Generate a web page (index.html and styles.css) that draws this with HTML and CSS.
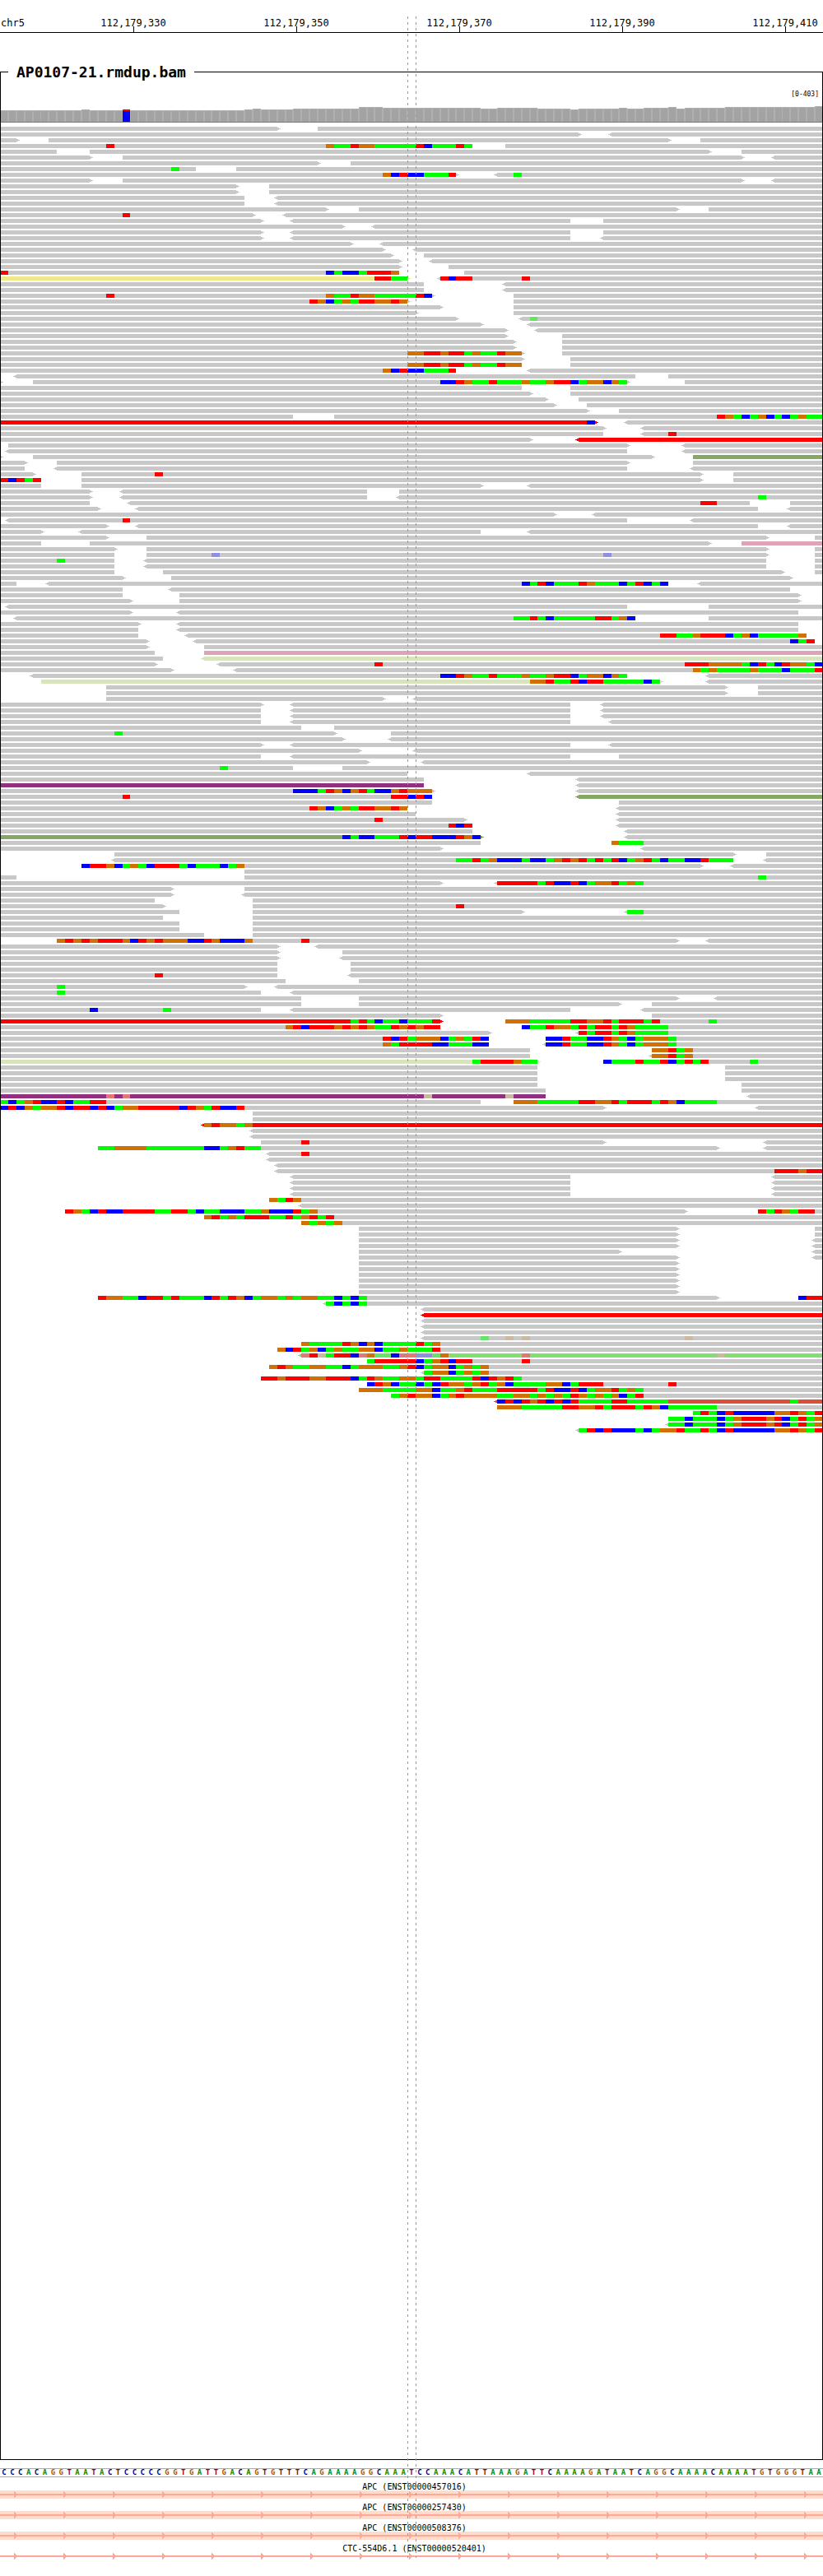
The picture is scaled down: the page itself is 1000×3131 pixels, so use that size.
FILE: index.html
```html
<!DOCTYPE html>
<html lang="en">
<head>
<meta charset="utf-8">
<title>AP0107-21.rmdup.bam</title>
<link rel="stylesheet" href="styles.css">
</head>
<body>
<main class="browser">
  <header>
    <svg class="ruler" role="img" aria-label="Position on chr5"></svg>
  </header>

  <fieldset class="track">
    <legend class="track-name">AP0107-21.rmdup.bam</legend>
    <div class="track-view">
      <p class="range">[0-403]</p>
      <svg class="coverage" role="img" aria-label="Coverage"></svg>
      <svg class="reads" role="img" aria-label="Aligned reads"></svg>
    </div>
  </fieldset>

  <div class="sequence"></div>

  <ul class="transcripts">
    <li class="transcript">
      <span class="transcript-name">APC (ENST00000457016)</span>
      <svg class="strand exon"></svg>
    </li>
    <li class="transcript">
      <span class="transcript-name">APC (ENST00000257430)</span>
      <svg class="strand exon"></svg>
    </li>
    <li class="transcript">
      <span class="transcript-name">APC (ENST00000508376)</span>
      <svg class="strand exon"></svg>
    </li>
    <li class="transcript">
      <span class="transcript-name">CTC-554D6.1 (ENST00000520401)</span>
      <svg class="strand"></svg>
    </li>
  </ul>

  <div class="guide guide-start"></div>
  <div class="guide guide-end"></div>
</main>
<script src="app.js"></script>
</body>
</html>
```
FILE: styles.css
```css
* {
  box-sizing: border-box;
}

body {
  margin: 0;
  background: #fff;
  color: #000;
  font-family: "DejaVu Sans Mono", monospace;
}

svg {
  display: block;
  width: 100%;
  shape-rendering: crispEdges;
}

.browser {
  position: relative;
  padding-bottom: 13px;
}

/* ruler */

.ruler {
  height: 77px;
  font-size: 12px;
}

.ruler-tick {
  fill: #000;
}

.ruler-label {
  text-anchor: middle;
}

/* alignment track */

.track {
  margin: 0;
  padding: 0;
  border: 1px solid #000;
  min-width: 0;
}

.track-name {
  margin-left: 9px;
  padding: 0 10px;
  font-size: 18px;
  font-weight: bold;
  line-height: 21px;
}

.track-view {
  overflow: hidden;
}

.track-view svg {
  width: calc(100% + 2px);
  margin-left: -1px;
}

.range {
  margin: 0;
  padding: 12px 4px 9px 0;
  font-size: 8px;
  line-height: 10px;
  text-align: right;
}

.coverage {
  height: 20px;
}

.bar-edge { fill: #b0b0b0; }
.bar { fill: #a3a3a3; }
.bar-base { fill: #7b7b7b; }

.reads {
  margin-top: 5px;
}

.read { fill: #c8c8c8; }
.read-red { fill: #f00; }
.read-khaki { fill: #f0e98c; }
.read-purple { fill: #913080; }
.read-olive { fill: #86a865; }
.read-pale { fill: #d8e4be; }
.read-pink { fill: #dca4b6; }
.read-lime { fill: #82df6f; }
.read-brick { fill: #d94f38; }

.base-A { fill: #0f0; }
.base-C { fill: #00f; }
.base-G { fill: #d17105; }
.base-T { fill: #f00; }
.base-a { fill: #64e664; }
.base-c { fill: #8f8fdc; }
.base-g { fill: #cab8a2; }
.base-t { fill: #e17878; }

/* reference sequence */

.sequence {
  display: grid;
  grid-template-columns: repeat(101, minmax(0, 1fr));
  margin-top: 10px;
  border: solid #aaa;
  border-width: 1px 0;
  font-size: 9px;
  font-weight: bold;
  line-height: 9px;
  text-align: center;
}

.nt-A { color: #009600; }
.nt-C { color: #00008b; }
.nt-G { color: #a5590a; }
.nt-T { color: #a00000; }

/* transcripts */

.transcripts {
  margin: 7px 0 0;
  padding: 0;
  list-style: none;
}

.transcript {
  height: 25px;
}

.transcript-name {
  display: block;
  margin-bottom: -1px;
  padding-left: 7px;
  font-size: 10px;
  line-height: 10px;
  text-align: center;
}

.strand {
  height: 10px;
}

.exon {
  background: #ffdccc;
}

.strand-mark {
  fill: #ffa898;
}

/* centre column guides */

.guide {
  position: absolute;
  top: 20px;
  bottom: 22px;
  width: 1px;
  background: repeating-linear-gradient(#999 0 3px, transparent 3px 7px);
}

.guide-start { left: calc(100% * 50 / 101); }
.guide-end { left: calc(100% * 51 / 101); }
```
FILE: app.js
```js
const BASES = 101;
const ROW = 7;
const READ = 5;
const MAX_ROWS = 405;

const pct = n => (n * 100 / BASES) + '%';
const rect = (a, b, y, h, cls) =>
  `<rect class="${cls}" x="${pct(a)}" width="${pct(b - a)}" y="${y}" height="${h}"/>`;

// Ruler: a tick every 20 bases
let ruler = '<text x="1" y="32">chr5</text><rect y="39" width="100%" height="1"/>';
for (let i = 0; i < 5; i++) {
  const x = pct(16.36 + i * 20);
  ruler += `<text class="ruler-label" x="${x}" y="32">112,179,${330 + i * 20}</text>` +
    `<rect class="ruler-tick" x="${x}" y="32" width="1" height="7"/>`;
}
document.querySelector('.ruler').innerHTML = ruler;

// Coverage: first base and height of each run of equal bars
const DEPTH = [[0, 14], [10, 15], [11, 14], [30, 15], [31, 16], [32, 15], [36, 16], [44, 18], [47, 17],
  [59, 16], [61, 17], [66, 16], [70, 15], [71, 16], [76, 17], [77, 16], [79, 17], [82, 18], [83, 16],
  [84, 17], [89, 18], [100, 19]];
const SNP = 15;
let coverage = '';
for (let i = 0; i < BASES; i++) {
  const h = DEPTH.filter(d => d[0] <= i).pop()[1];
  if (i === SNP) {
    coverage += rect(i, i + 1, 4, 2, 'base-T') + rect(i, i + 1, 6, 13, 'base-C');
  } else {
    coverage += rect(i, i + 1, 19 - h, h, 'bar-edge') + rect(i + 0.1, i + 0.9, 20 - h, h - 1, 'bar');
  }
}
coverage += '<rect class="bar-base" y="19" width="100%" height="1"/>';
document.querySelector('.coverage').innerHTML = coverage;

// Reads, one line per row. "a-b" is a read from base a to base b, "<" and ">" mark
// its strand end, ":name" its colour. "40G41A43" is G at 40, A from 41 up to 43;
// lower case is a low quality call.
const ROWS = `
-34> 39-
-71> <75-
-2> 6-82> 86-
-58 62- 13T14 40G41A43T44G46A51T52C53A56T57A58
-7 11-87> 91-
-11> 15-91> <95-
-39> 43-
-24 29- 21A22
-56> <61- 47G48C49T50C52A55T56 63A64
-11> 15-91> <95-
-29> 33-
-29> 33-
-30 <34-
-30 <34-
-40> 44-83> 87-
-31> <35- 15T16
-32> <36-70 74-
-42> <46-
-32> <36-70 74-
-32> <36-70 <74-
-43> <47-
-47> <51-
-48> 52-
-49> <53-
-49> 55-
-49 57- 0T1 40C41A42C44A45T48G49
-50>:khaki <54- 46T48A50 54T55C56T58 64T65
-52 <62-
-52 <62-
-53> 63- 13T14 40G41A43T44G46A51T52C53
-50> 63- 38T39G40C41A42G43A44T46G48T49G50
-54> 63-
-51> 63-
-56> <64- 65a66
-59> <65-
-62> <66-
-62> 69-
-63> 69-
-63> 69-
-64> 69- 50G52T54G55T57A58G59A61T62G64
-64> 70-
-64 70- 50G52T54G55T57A58G59A61T62G64
-56 <65- 47G48C49T50C52A55T56
<2-78 82-
-0> 4-77> 84- 54C56T57G58A60T61A64G65A67G68T70C71A72G74C75G76A77
-64 70-
-65> 70-
-67> 71-
-68> 72-
-72> 76-
-36 41- 88T89G90A91C92A93G94C95A96C97A98G99A101
-73>:red <77- 72C73
-74> <79-
-74 <79- 82T83
-65> <71-:red
1-77> <84-
<1-77 <84-
-0> 4-80> 85-:olive
-3> 7-77> 85-
-3 <7-77 <85-
-4> 10-86> 90- 19T20
-5 10-86> 90- 0T1C2T3A4T5
-5 10-59> <65-
-11> <15-45 49-
-11> <15-45 <49- 93A94
-11 <16-92 97- 86T88
-12> <17-93 <97-
-68> <73-
<1-77 <85- 15T16
-13> <17-93 <97-
-5> <10-59 <65-
-13> 18-94> 100-
-5 11-87> 91-:pink
-14> 18-94> 100-
-14 18-94> 100- 26c27 74c75
-14 <18-94 100- 7A8
-14 <18-94 100-
-14 20-96> 100-
-15> 21-97>
-2 <6-82 <86- 64C65A66T67C68A71T72G73A76C77A78T79C80A81C82
-15 <21-97
-15 22-98>
-16> 22-98>
<1-77 87-
-16> <22-98
<2-78 87- 63A65T66A67C68A73T75A76G77C78
-17> <22-98
-17 <22-98
-17 <23-99 81T83A85G86T89C90A91G92C93A98G99
-18> <24-100 97C98A99T100
-18> 25-
-19 25-:pink
-20 <25-:pale
-19> <27- 46T47 84T87G91A92C93T94A95C96T97G99A100C101
-21> <29- 85G86A87G88A92G93A96C97A100T101
<4-77 <87- 54C56T57G58A60T61A64G65A67G68T70C71A72G74C75G76A77
5-81>:pale <87- 65G67T68A70T71C72T74A79C80A81
13-89> 93-
13-89> 93-
13-47> <51-
-32> <36-70 <74-
-32 <36-70 <74-
-32 <36-70 <74-
-32 <36-70 <75-
-37 41-
-41> 48- 14A15
-42> <48-
-32> <36-70 <75-
-44> <51-
-32 <36-70 76-
-45> <52-
-36 42- 27A28
-50 <65-
-52 <71-
-52:purple <71-
-53> <71- 36C39A40T41G42C43G44T45A46C48G49T50G53
-53 <71-:olive 15T16 48T50C51T52C53
-53 76-
-50 <76- 38T39G40C41A42G43A44T46G48T49G50
-51 <76-
-57> <76- 46T47
-58 <76- 55T56C57T58
-58 <77-
-59>:olive <77- 42C43A44C46A49T50C51T53C56T57G58C59
-59 75- 75G76A79
-54> <79-
14-90> 94-
<14-90 <94- 56A58T59A60G61C64A65C67A68G69T70G71T72A73T74A75T76C77A78G79T80A81C82A84C86T87A90
10-86> <90- 10C11T13G14C15A16G17A18C19T22A23C24A27C28A29G30
30-
-2 30- 93A94
-54> <61- 61T66A67T68C70T71C72A73G75T76A77G78A79
-21> 30-
-21> <30-
-19 31-
-20> 31- 56T57
-22 31-64> <77- 77A79
-20 31-
-22 31-
-22 31-
-25 31-
7-83> <87- 7G8T9G10T11G12T15G16C17T18G19T20G23C25T26G27C30G31 37T38
-34> <39-
-34> 42-
-34> <42-
-34 43-
-34 43-
-34 <43- 19T20
-35 44-
-30> <34- 7A8
-32 <36- 7A8
-37 44-83> <88-
-37 44-76> 80-
-32 <36-70 <79- 11C12 20A21
-54> 80-
-54>:red 62- 43A44T45A46C47A49C50A53T54 62G65A70T72G74T75A76T79A80T81 87A88
-54 64- 35G36T37C38T41G42T43G44T45G46A48T49G50T51G52T54 64C65A67T68G70A71T72A73T75A76T77G78A82
-60> <71- 71T72A73T75A76T77G78A82
-60 67- 47T48C49T50A51G54C55A56G57A58T59C60 67C69T70A72C74T75G76A77C78A79G82A83
-60 <67- 47G48A49T53C55A58C60 67C69T70A72C74T75G76A77C78A79G82A83
-65 80- 80G82T83A84G85
-65 <80- 80G82T83A84G85
-66>:pale 74- 58A59T63G64A66 74C75A78T79A81T82C83A84T85A86T87 92A93
-66 89-
-66 89-
-66 89-
-66 91-
-67 91-
-67:purple <92- 13t14 15t16 52g53 62g63
-59 63- 0A1C2A3G4T5C7T8C9A11T13 63G66A71T73G75T76A77T80A81T82G83C84A88
-74> <93- 0C1T2C3G4A5G7T8C9T11C12T13C14A15G17T22C23T24G25A26T27C29T30
31-
31-
<25-:red 25G26T27G29A30G31
<31-
<31-
32-74> <94- 37T38
12-88> <94- 12A14G18A25C27A28G29T30A32
<33- 37T38
<33-
<34-
<34- 95T98G99T101
<36-70 <95-
<36-70 <95-
<36-70 <95-
<36-70 <95-
33- 33G34A35T36G37
<37-
8-84> 93- 8T9G10A11C12T13C15T19A21T23A24C25A27C30A32G33C36T37A38G39 93T94A95T96G97A98T100
25- 25G26T27A28G29A30T33A35T36A37G38T39A40T41
37- 37G38A39G40A41G42
44-83> 100-
44-83> 100-
44-83> <100-
44-83> <100-
44-76> <100-
44-83> <100-
44-83>
44-83>
44-83>
44-83>
44-83>
44-83>
12-88> 98- 12T13G15A17C18T20A21T22A25C26T27A28T29G30C31A32G34A35G36A37G39A41C42A43C44A45 98C99T101
<40- 40A41C42A43C44A45
<52-
<52-:red
<52-
<52-
<52-
<52- 59a60 62g63 64g65 84g85
37- 37G38A42T43G44C45G46C47A51T52A53G54
34- 34G35C36T37A38G39C40A41G42A44G46C47A49G50A53T54
<37-:lime 37t38T39g40A41T43C44t45G46a48C49t51c53a54G55 64t65 88g89
45- 45A46T51C52A53G54T55C56T58 64T65
33- 33G34T35G36A38G40A42C43A44G47A49G50T51C52A53G55C56A57G58A59G60
<52- 52A53G55C56A57G58A59G60
32- 32T34G35T38G40T43C44A45T46G47A49G51A52T54A58T59C60T61G62T63A64
45- 45C46T47G48C49A51C52A53C54T55G57A58G59T60A61G62C63A67G69C70A71T74 82T83
44- 44G47A51G53C54A56G57T58A61T66A67T68C70T71C72A73G75T76A77G78A79
48- 48A49G50T51G53C54A55G56T57G61A63G65A66G67A68G69A70T71G72A73G74A75G76C77A78T79
<61-:brick 61C62T63C64T65G66T67C68T69C70T71A75T77A82 97A98
61- 61G64A69T71G73T74A75T78A79T80G81C82A88
85- 85A86T87A88C89T90C95G97T98G99A100T101
82- 82A84C85A88C89A90G91T94G95T96C97A98T99A100G101
<82- 82A84C85A88C89A90G91T94G95T96C97A98T99A100G101
<71- 71A72T73C74T75C78A79C80A81G83T84A86T87A88C89T90C95G97T98G99A100T101
`.trim().split('\n');

const tip = (base, y, cls, dir) =>
  `<svg x="${pct(base)}" y="${y}" width="1" height="5" overflow="visible">` +
  `<path class="${cls}" transform="scale(${dir} 1)" d="M0 1h2v3h-2zM2 2h2v1h-2z"/></svg>`;

let reads = '';
ROWS.forEach((line, n) => {
  const y = n * ROW;
  line.split(' ').forEach(token => {
    const read = token.match(/^(<?)(\d*)-(\d*)(>?):?([a-z]*)$/);
    if (read) {
      const start = Number(read[2] || 0);
      const end = Number(read[3] || BASES);
      const cls = read[5] ? 'read-' + read[5] : 'read';
      reads += rect(start, end, y, READ, cls);
      if (read[1]) reads += tip(start, y, cls, -1);
      if (read[4]) reads += tip(end, y, cls, 1);
      return;
    }
    for (const m of token.matchAll(/(\d+)([ACGTacgt])(?=(\d+))/g)) {
      reads += rect(Number(m[1]), Number(m[3]), y, READ, 'base-' + m[2]);
    }
  });
});
const readsSvg = document.querySelector('.reads');
readsSvg.setAttribute('height', MAX_ROWS * ROW);
readsSvg.innerHTML = reads;

// Reference sequence
const SEQUENCE = 'CCCACAGGTAATACTCCCCCGGTGATTGACAGTGTTTCAGAAAAGGCAAA' +
  'TCCAAACATTAAAGATTCAAAAGATAATCAGGCAAAACAAAATGTGGGTAA';
document.querySelector('.sequence').innerHTML =
  [...SEQUENCE].map(b => `<span class="nt-${b}">${b}</span>`).join('');

// Transcripts: a strand line with an arrow head every 60 pixels
document.querySelectorAll('.strand').forEach((svg, i) => {
  svg.innerHTML =
    `<pattern id="heads${i}" x="17" width="60" height="10" patternUnits="userSpaceOnUse">` +
    '<path class="strand-mark" d="M0 1h1v1h1v1h1v4h-1v1h-1v1h-1z"/></pattern>' +
    '<rect class="strand-mark" y="4" width="100%" height="2"/>' +
    `<rect width="100%" height="10" fill="url(#heads${i})"/>`;
});
```
